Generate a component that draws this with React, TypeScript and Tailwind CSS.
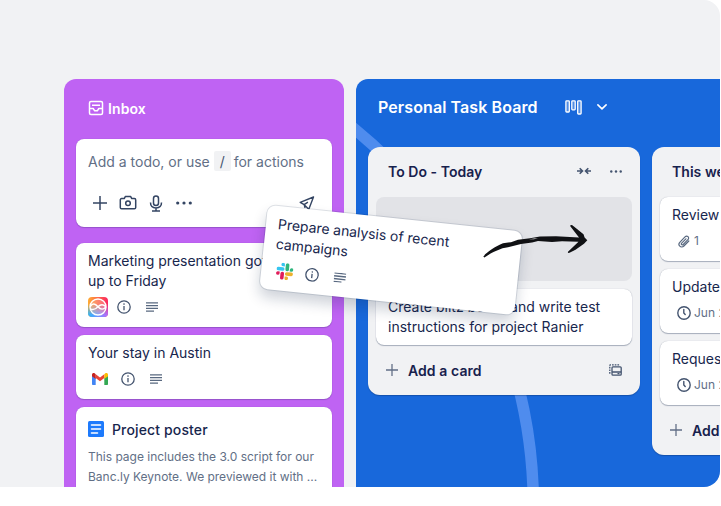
import React from "react";

type IconProps = { className?: string };

const InboxIcon = () => (
  <svg width="16" height="16" viewBox="0 0 16 16" fill="none" stroke="white" strokeWidth="1.5" strokeLinejoin="round">
    <rect x="1.5" y="1.5" width="13" height="13" rx="1.5" />
    <path d="M4 5.3h8M1.8 8.5h3.400l1.500 2.300h2.600l1.500-2.300h3.400" />
  </svg>
);

const PlusIcon = ({ className }: IconProps) => (
  <svg className={className} viewBox="0 0 14 14" fill="none" stroke="currentColor" strokeWidth="1.5">
    <path d="M7 0v14M0 7h14" />
  </svg>
);

const CameraIcon = () => (
  <svg width="18" height="16" viewBox="0 0 18 16" fill="none" stroke="currentColor" strokeWidth="1.5" strokeLinejoin="round">
    <path d="M2.6 3.6h2.6l1.1-2h5.4l1.1 2h2.6c.8 0 1.3.5 1.3 1.3v7.5c0 .8-.5 1.3-1.3 1.3H2.6c-.8 0-1.3-.5-1.3-1.3V4.900c0-.8.500-1.300 1.300-1.300z" />
    <circle cx="9" cy="8.300" r="2.300" />
  </svg>
);

const MicIcon = () => (
  <svg width="14" height="17" viewBox="0 0 14 17" fill="none" stroke="currentColor" strokeWidth="1.5">
    <rect x="4.500" y="1" width="5" height="9.500" rx="2.500" />
    <path d="M1.500 7.500c0 3.300 2.200 5.400 5.500 5.400s5.500-2.100 5.500-5.400M7 13v3M3 16h8" />
  </svg>
);

const DotsIcon = ({ className }: IconProps) => (
  <svg className={className} viewBox="0 0 16 4" fill="currentColor">
    <circle cx="1.700" cy="2" r="1.600" />
    <circle cx="8" cy="2" r="1.600" />
    <circle cx="14.300" cy="2" r="1.600" />
  </svg>
);

const SendIcon = () => (
  <svg width="16" height="16" viewBox="0 0 16 16" fill="none" stroke="currentColor" strokeWidth="1.400" strokeLinejoin="round">
    <path d="M14.500 2 1.200 7.300l4 2.400 4.600 4.500zM5.200 9.700 8.900 7.200M5.200 9.700l.7 2.500 1.300-1.200" />
  </svg>
);

const InfoIcon = () => (
  <svg width="14" height="14" viewBox="0 0 14 14" fill="none" stroke="#44546f" strokeWidth="1.300">
    <circle cx="7" cy="7" r="6.200" />
    <path d="M7 6.100v4.200" />
    <circle cx="7" cy="4.100" r=".8" fill="#44546f" stroke="none" />
  </svg>
);

const LinesIcon = () => (
  <svg width="12" height="10" viewBox="0 0 12 10" fill="none" stroke="#596980" strokeWidth="1.300">
    <path d="M0 .8h12M0 3.600h12M0 6.400h12M0 9.200h8" />
  </svg>
);

const SiriIcon = () => (
  <svg width="20" height="20" viewBox="0 0 20 20" fill="none">
    <defs>
      <linearGradient id="sa" x1="0" y1="0" x2="1" y2="0">
        <stop stopColor="#ffad33" />
        <stop offset="1" stopColor="#fb2560" />
      </linearGradient>
      <linearGradient id="sb" x1="0" y1="0" x2="1" y2="0">
        <stop stopColor="#28b8ff" />
        <stop offset="1" stopColor="#b56cff" />
      </linearGradient>
      <linearGradient id="sc" x1="0" y1="0" x2="0" y2="1">
        <stop offset=".35" stopColor="white" stopOpacity="0" />
        <stop offset=".9" stopColor="white" />
      </linearGradient>
      <mask id="sm">
        <rect width="20" height="20" fill="url(#sc)" />
      </mask>
    </defs>
    <rect width="20" height="20" rx="4" fill="url(#sa)" />
    <rect width="20" height="20" rx="4" fill="url(#sb)" mask="url(#sm)" />
    <circle cx="10" cy="10" r="8" fill="white" fillOpacity=".2" stroke="white" strokeWidth="1.400" />
    <path d="M2.200 9.500C4.500 6 7 6.300 10 9.800c2.600 3 5.500 3.200 7.800.2M2.400 11.800c2.700 1.700 5 .7 7.600-2 2.600-2.600 5.400-2.700 7.800 0" stroke="white" strokeWidth="1.400" />
  </svg>
);

const GmailIcon = () => (
  <svg width="16" height="12" viewBox="0 0 16 12">
    <path d="M0 2v9c0 .6.500 1 1 1h2.700V4.800z" fill="#4285f4" />
    <path d="M16 2v9c0 .6-.5 1-1 1h-2.700V4.800z" fill="#34a853" />
    <path d="M3.700 5V1.200L8 4.500l4.300-3.300V5L8 8.300z" fill="#ea4335" />
    <path d="M0 3.200V1.700C0 .1 1.700-.5 2.900.5l.8.700V6L0 3.200z" fill="#c5221f" />
    <path d="M16 3.200V1.700C16 .1 14.300-.5 13.100.5l-.8.700V6L16 3.200z" fill="#fbbc04" />
  </svg>
);

const DocIcon = () => (
  <svg width="16" height="16" viewBox="0 0 16 16">
    <rect width="16" height="16" rx="1.500" fill="#1d7afc" />
    <path d="M3.500 4h9M3.500 8h9M3.500 12h6" stroke="white" strokeWidth="1.600" strokeLinecap="round" />
  </svg>
);

const SlackIcon = () => (
  <svg width="17" height="17" viewBox="0 0 24 24">
    <path fill="#e01e5a" d="M5.042 15.165a2.528 2.528 0 0 1-2.520 2.523A2.528 2.528 0 0 1 0 15.165a2.527 2.527 0 0 1 2.522-2.520h2.520zM6.313 15.165a2.527 2.527 0 0 1 2.521-2.520 2.527 2.527 0 0 1 2.521 2.520v6.313A2.528 2.528 0 0 1 8.834 24a2.528 2.528 0 0 1-2.521-2.522z" />
    <path fill="#36c5f0" d="M8.834 5.042a2.528 2.528 0 0 1-2.521-2.520A2.528 2.528 0 0 1 8.834 0a2.528 2.528 0 0 1 2.521 2.522v2.520zM8.834 6.313a2.528 2.528 0 0 1 2.521 2.521 2.528 2.528 0 0 1-2.521 2.521H2.522A2.528 2.528 0 0 1 0 8.834a2.528 2.528 0 0 1 2.522-2.521z" />
    <path fill="#2eb67d" d="M18.956 8.834a2.528 2.528 0 0 1 2.522-2.521A2.528 2.528 0 0 1 24 8.834a2.528 2.528 0 0 1-2.522 2.521h-2.522zM17.688 8.834a2.528 2.528 0 0 1-2.523 2.521 2.527 2.527 0 0 1-2.520-2.521V2.522A2.527 2.527 0 0 1 15.165 0a2.528 2.528 0 0 1 2.523 2.522z" />
    <path fill="#ecb22e" d="M15.165 18.956a2.528 2.528 0 0 1 2.523 2.522A2.528 2.528 0 0 1 15.165 24a2.527 2.527 0 0 1-2.520-2.522v-2.522zM15.165 17.688a2.527 2.527 0 0 1-2.520-2.523 2.526 2.526 0 0 1 2.520-2.520h6.313A2.527 2.527 0 0 1 24 15.165a2.528 2.528 0 0 1-2.522 2.523z" />
  </svg>
);

const BoardIcon = () => (
  <svg width="17" height="15" viewBox="0 0 17 15" fill="white" fillOpacity=".25" stroke="white" strokeWidth="1.300">
    <rect x=".9" y=".8" width="3.400" height="11.200" rx=".7" />
    <rect x="6.800" y=".8" width="3.400" height="9" rx=".7" />
    <rect x="12.700" y=".8" width="3.400" height="13.200" rx=".7" />
  </svg>
);

const ChevronIcon = () => (
  <svg width="10" height="6" viewBox="0 0 10 6" fill="none" stroke="white" strokeWidth="1.600" strokeLinecap="round" strokeLinejoin="round">
    <path d="m.9.9 4.100 4 4.100-4" />
  </svg>
);

const CollapseIcon = () => (
  <svg width="14" height="8" viewBox="0 0 14 8" fill="none" stroke="#44546f" strokeWidth="1.600">
    <path d="M0 4h5M2.700 1.200 5.500 4 2.700 6.800M14 4H9M11.300 1.200 8.500 4l2.800 2.800" />
  </svg>
);

const TemplateIcon = () => (
  <svg width="13" height="12" viewBox="0 0 13 12" fill="none" stroke="#44546f" strokeWidth="1.300">
    <rect x="3" y="2.800" width="9.200" height="8.400" rx="1" />
    <path d="M3 8h9.200M8.500 9.700h2" />
    <path d="M.8 9.800V1.500c0-.4.300-.7.700-.7h9.300" strokeDasharray="1.700 1" />
  </svg>
);

const ClipIcon = () => (
  <svg width="14" height="13" viewBox="-1 0 14 13" fill="none" stroke="#596980" strokeWidth="1.200" strokeLinecap="round">
    <path d="m10.800 6-4.900 5c-1.200 1.200-3 1.300-4.100.2s-1-2.900.2-4.100l5-5.200c.9-.9 2.200-1 3-.2s.8 2.100-.1 3L5.200 9.500c-.5.500-1.200.600-1.600.2s-.4-1.100.1-1.600L7.900 3.800" />
  </svg>
);

const ClockIcon = () => (
  <svg width="14" height="14" viewBox="0 0 14 14" fill="none" stroke="#44546f" strokeWidth="1.400" strokeLinecap="round">
    <circle cx="7" cy="7" r="6.200" />
    <path d="M6.800 3.500V7l1.400 1.500" />
  </svg>
);

const inboxCard = "rounded-lg bg-white px-3 shadow-[0_0_1px_rgba(9,30,66,0.25),0_1px_1px_rgba(9,30,66,0.2)]";
const listCard = "rounded-lg bg-white px-3 shadow-[0_1px_1px_rgba(9,30,66,0.3),0_0_1px_rgba(9,30,66,0.3)]";
const list = "flex w-[272px] shrink-0 flex-col rounded-xl bg-[#f1f2f4] px-2 shadow-[0_1px_1px_rgba(9,30,66,0.3)]";

function Inbox() {
  return (
    <section className="flex h-[408px] w-[280px] shrink-0 flex-col overflow-hidden rounded-t-xl bg-[#bf63f3] px-3">
      <header className="flex h-[60px] shrink-0 items-center gap-1 pl-3 pb-[2px]">
        <InboxIcon />
        <span className="text-[14px] font-semibold tracking-[0.1px] text-white">Inbox</span>
      </header>
      <div className={`${inboxCard} mb-4 h-[88px] shrink-0 pt-[12px]`}>
        <p className="flex h-5 items-center whitespace-pre text-[14px] text-[#626f86]">
          Add a todo, or use <span className="mr-[3px] flex h-5 w-[17px] items-center justify-center rounded-[2px] bg-[#f1f2f4] text-[#44546f]">/</span>for actions
        </p>
        <div className="mt-[22px] flex h-5 items-center pl-[5px] pr-[5px] text-[#344563]">
          <PlusIcon className="h-[14px] w-[14px]" />
          <span className="ml-3"><CameraIcon /></span>
          <span className="ml-[12px]"><MicIcon /></span>
          <DotsIcon className="ml-[13px] h-1 w-4" />
          <span className="ml-auto"><SendIcon /></span>
        </div>
      </div>
      <div className={`${inboxCard} mb-2 h-[84px] shrink-0 pt-2`}>
        <p className="whitespace-nowrap text-[14px] leading-5 text-[#17264d]">
          Marketing presentation got
          <br />
          up to Friday
        </p>
        <div className="mt-[6px] flex items-center">
          <SiriIcon />
          <span className="ml-[9px]"><InfoIcon /></span>
          <span className="ml-[15px]"><LinesIcon /></span>
        </div>
      </div>
      <div className={`${inboxCard} mb-2 h-16 shrink-0 pt-2`}>
        <p className="text-[14px] leading-5 text-[#17264d]">Your stay in Austin</p>
        <div className="mt-[9px] flex items-center pl-1">
          <GmailIcon />
          <span className="ml-[13px]"><InfoIcon /></span>
          <span className="ml-[15px]"><LinesIcon /></span>
        </div>
      </div>
      <div className={`${inboxCard} h-24 shrink-0 pt-3`}>
        <div className="flex h-5 items-center gap-2">
          <DocIcon />
          <span className="text-[14px] font-medium tracking-[0.14px] text-[#17264d]">Project poster</span>
        </div>
        <p className="mt-2 whitespace-nowrap text-[12px] leading-5 tracking-[-0.01px] text-[#626f86]">
          This page includes the 3.0 script for our
          <br />
          Banc.ly Keynote. We previewed it with ...
        </p>
      </div>
    </section>
  );
}

function AddCard({ template }: { template?: boolean }) {
  return (
    <div className="flex h-[51px] items-center pl-[10px] pr-[10px]">
      <PlusIcon className="h-3 w-3 text-[#626f86]" />
      <span className="ml-[10px] whitespace-nowrap text-[14px] font-semibold tracking-[0.08px] text-[#17214d]">Add a card</span>
      {template && <span className="ml-auto"><TemplateIcon /></span>}
    </div>
  );
}

const weekCards = [
  { title: "Review", meta: "1", clock: false },
  { title: "Update", meta: "Jun 24", clock: true },
  { title: "Request", meta: "Jun 25", clock: true },
];

function Board() {
  return (
    <section className="relative h-[408px] w-[364px] shrink-0 overflow-hidden rounded-tl-xl bg-[#1868db]">
      <svg className="absolute inset-0" width="364" height="408" fill="none">
        <circle cx="-310.6" cy="427.6" r="488" stroke="#4f8cee" strokeWidth="11.5" />
      </svg>
      <header className="relative flex h-[68px] items-center pb-[12px] pl-[22px]">
        <h1 className="text-[16px] font-semibold tracking-[0.09px] text-white">Personal Task Board</h1>
        <span className="ml-[27px]"><BoardIcon /></span>
        <span className="ml-[15px]"><ChevronIcon /></span>
      </header>
      <div className="relative flex items-start gap-3 pl-3">
        <div className={`${list} h-[248px]`}>
          <div className="flex h-[50px] shrink-0 items-center pl-3 pr-[10px] pb-[2px]">
            <span className="text-[14px] font-semibold tracking-[0.04px] text-[#17214d]">To Do - Today</span>
            <span className="ml-auto"><CollapseIcon /></span>
            <DotsIcon className="ml-[19px] h-[3px] w-3 text-[#44546f]" />
          </div>
          <div className="h-[84px] shrink-0 rounded-lg bg-[#e2e3e7]" />
          <div className={`${listCard} mt-2 h-14 shrink-0 pt-2`}>
            <p className="whitespace-nowrap text-[14px] leading-5 text-[#17264d]">
              Create blitz board and write test
              <br />
              instructions for project Ranier
            </p>
          </div>
          <AddCard template />
        </div>
        <div className={`${list} h-[308px]`}>
          <div className="flex h-[50px] shrink-0 items-center pb-[2px] pl-3">
            <span className="text-[14px] font-semibold tracking-[0.04px] text-[#17214d]">This week</span>
          </div>
          <div className="flex flex-col gap-2">
            {weekCards.map((c) => (
              <div key={c.title} className={`${listCard} h-16 pt-2`}>
                <p className="text-[14px] leading-5 text-[#17264d]">{c.title}</p>
                <div className="mt-[6px] flex h-5 items-center gap-[3px] pl-[5px] text-[12px] text-[#626f86]">
                  {c.clock ? <ClockIcon /> : <ClipIcon />}
                  <span className="whitespace-nowrap">{c.meta}</span>
                </div>
              </div>
            ))}
          </div>
          <AddCard />
        </div>
      </div>
    </section>
  );
}

function DraggedCard() {
  return (
    <div className="absolute left-[263px] top-[218px] h-[84px] w-[256px] rotate-6 rounded-lg bg-white px-3 pt-2 shadow-[0_0_0_1px_rgba(9,30,66,0.12),0_8px_14px_rgba(9,30,66,0.2)]">
      <p className="text-[14px] leading-5 tracking-[-0.04px] text-[#17264d]">
        Prepare analysis of recent
        <br />
        campaigns
      </p>
      <div className="mt-[8px] flex items-center pl-[3px]">
        <SlackIcon />
        <span className="ml-[12px]"><InfoIcon /></span>
        <span className="ml-[15px]"><LinesIcon /></span>
      </div>
    </div>
  );
}

function Arrow() {
  return (
    <svg className="absolute left-[480px] top-[220px]" width="112" height="42" viewBox="480 220 112 42" fill="#101114">
      <path d="M483.300 256.700C486 252.500 495 246.500 503 243.300L511 242.200 518 239.800 530 238.300 540 236.600 556 236.300 579 237.500 570.300 226.300C570 224.800 572 224.700 573.300 226L583.500 234.200 584.600 237.500 587.300 240.300 584 243.700 575.500 249.800 569.500 252.800C567.800 253.300 567.300 252.300 568.500 251.200L578.500 241.700 562 241.200 552 241.900 538 240.900 532 242.600 521 244 508 247.200 502.500 248.200 494 251.700C490 253.500 486.500 256.500 484.500 257.400z" />
      <path d="M529 239.300l9-1.200-4 1.100z" fill="#f1f2f4" />
    </svg>
  );
}

export default function App() {
  return (
    <main className="h-[506px] w-[721px] overflow-hidden bg-white font-[Inter,sans-serif]">
      <div className="relative flex h-[487px] w-[720px] gap-3 overflow-hidden rounded-r-2xl bg-[#f1f2f4] pl-16 pt-[79px]">
        <Inbox />
        <Board />
        <DraggedCard />
        <Arrow />
      </div>
    </main>
  );
}
